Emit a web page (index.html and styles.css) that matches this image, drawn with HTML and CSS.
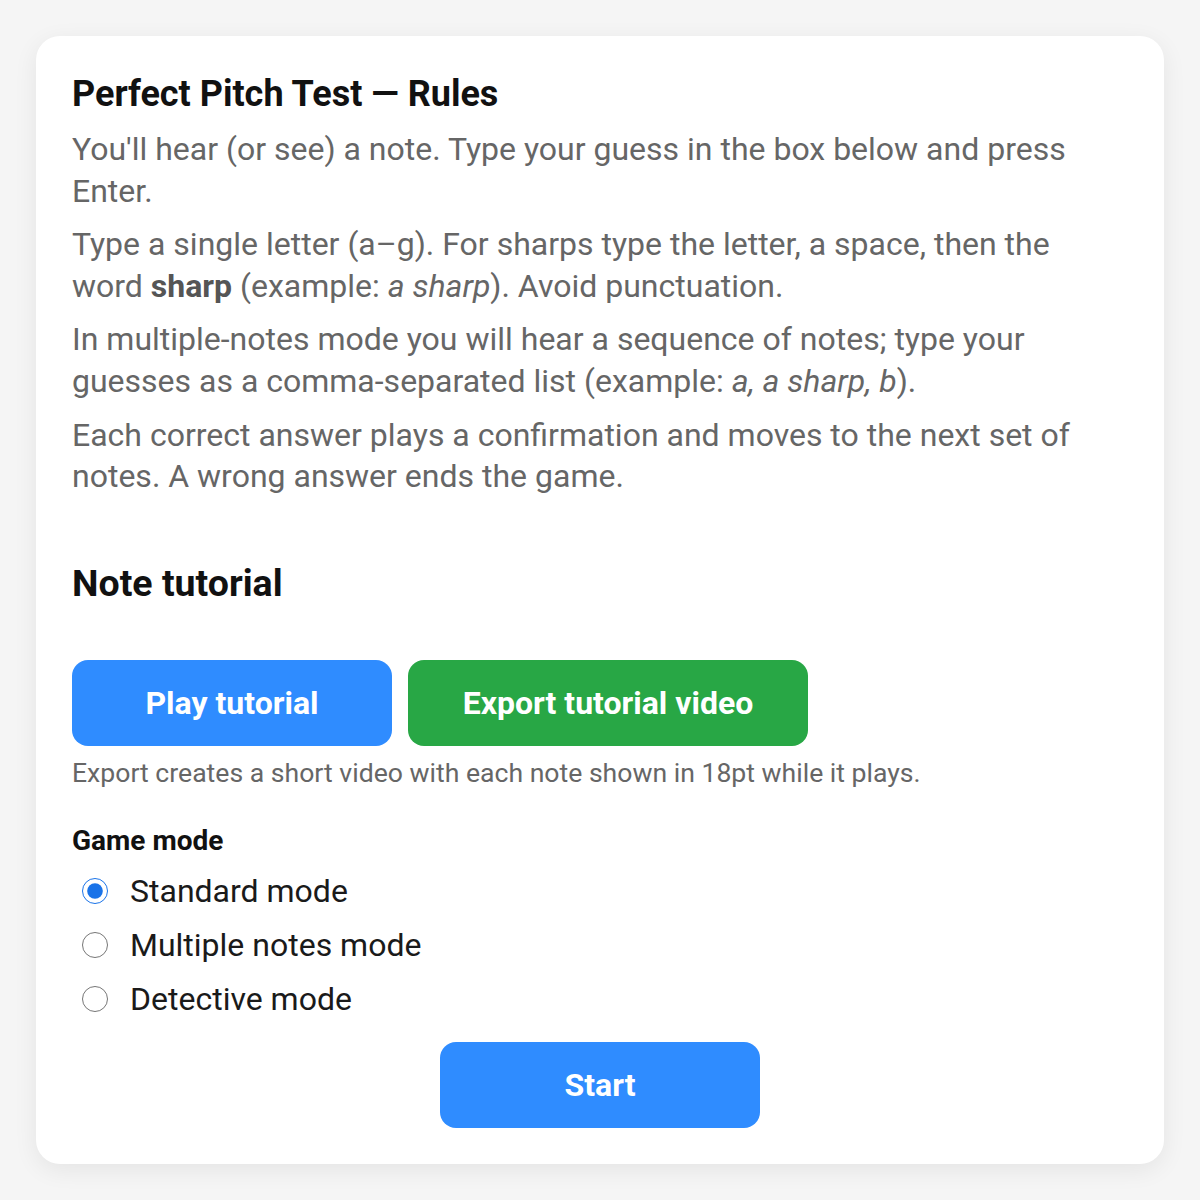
FILE: index.html
```html
<!DOCTYPE html>
<html lang="en">
<head>
    <meta charset="UTF-8">
    <meta name="viewport" content="width=device-width, initial-scale=1.0">
    <title>Perfect Pitch Test</title>
    <link rel="stylesheet" href="styles.css">
</head>
<body>
    <div class="card">
        <h1 class="title">Perfect Pitch Test — Rules</h1>
        <p class="rule">You'll hear (or see) a note. Type your guess in the box below and press Enter.</p>
        <p class="rule">Type a single letter (a–g). For sharps type the letter, a space, then the word <b>sharp</b> (example: <i>a sharp</i>). Avoid punctuation.</p>
        <p class="rule">In multiple-notes mode you will hear a sequence of notes; type your guesses as a comma-separated list (example: <i>a, a sharp, b</i>).</p>
        <p class="rule">Each correct answer plays a confirmation and moves to the next set of notes. A wrong answer ends the game.</p>

        <h2 class="section-title">Note tutorial</h2>
        <div class="button-row">
            <button class="btn btn-blue btn-play">Play tutorial</button>
            <button class="btn btn-green btn-export">Export tutorial video</button>
        </div>
        <p class="hint">Export creates a short video with each note shown in 18pt while it plays.</p>

        <div class="mode-label">Game mode</div>
        <div class="modes">
            <label class="mode"><input type="radio" name="mode" checked> Standard mode</label>
            <label class="mode"><input type="radio" name="mode"> Multiple notes mode</label>
            <label class="mode"><input type="radio" name="mode"> Detective mode</label>
        </div>

        <div class="start-row">
            <button class="btn btn-blue btn-start">Start</button>
        </div>
    </div>
</body>
</html>
```

FILE: styles.css
```css
body {
    margin: 0;
    padding: 36px;
    background: #f5f5f5;
    font-family: Roboto, "Noto Sans", Arial, sans-serif;
}

.card {
    background: #fff;
    border-radius: 24px;
    padding: 36px;
    box-shadow: 0 6px 24px rgba(0, 0, 0, 0.07);
}

.title {
    margin: 0 0 13px 0;
    font-size: 36px;
    line-height: 44px;
    font-weight: 700;
    color: #111;
}

.rule {
    margin: 0 0 12px 0;
    font-size: 32px;
    line-height: 1.3;
    color: #666;
}

.rule b {
    color: #555;
}

.section-title {
    margin: 63px 0 55px 0;
    font-size: 37.5px;
    line-height: 44px;
    font-weight: 700;
    color: #111;
}

.button-row {
    display: flex;
    gap: 16px;
}

.btn {
    height: 86px;
    border: none;
    border-radius: 16px;
    color: #fff;
    font-family: inherit;
    font-size: 32px;
    font-weight: 700;
    cursor: pointer;
}

.btn-blue {
    background: #2f8cff;
}

.btn-green {
    background: #28a745;
}

.btn-play {
    width: 320px;
}

.btn-export {
    width: 400px;
}

.hint {
    margin: 10px 0 0 0;
    font-size: 26.6px;
    line-height: 34px;
    color: #666;
}

.mode-label {
    margin-top: 34px;
    font-size: 28px;
    line-height: 34px;
    font-weight: 700;
    color: #111;
}

.modes {
    display: flex;
    flex-direction: column;
    margin-top: 6px;
}

.mode {
    display: flex;
    align-items: center;
    gap: 22px;
    height: 54px;
    font-size: 32px;
    color: #1a1a1a;
}

.mode input {
    width: 26px;
    height: 26px;
    margin: 0 0 0 10px;
    accent-color: #1a73e8;
}

.start-row {
    display: flex;
    justify-content: center;
    margin-top: 16px;
}

.btn-start {
    width: 320px;
}
```
